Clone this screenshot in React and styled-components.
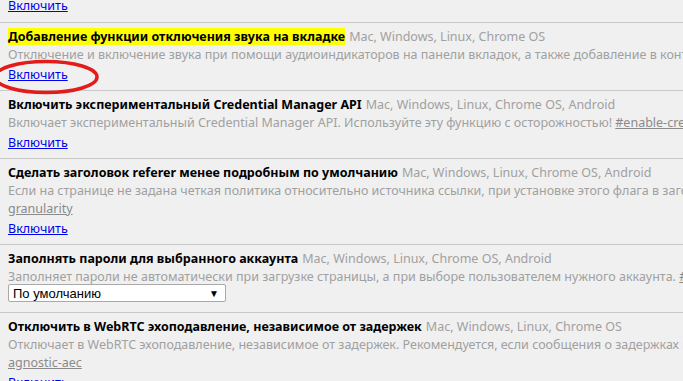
import styled, { createGlobalStyle } from 'styled-components';

const GlobalStyle = createGlobalStyle`
  html, body {
    margin: 0;
    padding: 0;
    background: #f0f0f0;
    overflow: hidden;
  }
  body {
    font-family: 'Noto Sans', 'Open Sans', sans-serif;
    font-size: 12.5px;
  }
`;

const Page = styled.div`
  position: relative;
  width: 683px;
  height: 381px;
  overflow: hidden;
`;

const Experiment = styled.div`
  padding: ${(p) => (p.$tail ? '0 8px 10px' : '4px 8px 6px')};
  border-bottom: 1px solid #c9c9c9;
  white-space: nowrap;

  &:last-child {
    border-bottom: none;
  }
`;

const Title = styled.div`
  line-height: 19px;
  color: #000;

  strong {
    font-weight: 700;
    background: ${(p) => (p.$hl ? '#ffff00' : 'transparent')};
  }

  span {
    color: #a0a0a0;
    margin-left: 4px;
  }
`;

const Desc = styled.div`
  line-height: 18px;
  color: #a0a0a0;

  a {
    color: #8a8a8a;
    text-decoration: underline;
  }
`;

const Extra = styled.div`
  line-height: 18px;

  a {
    color: #8a8a8a;
    text-decoration: underline;
  }
`;

const Enable = styled.a`
  display: block;
  margin-top: ${(p) => (p.$tail ? '0' : '1px')};
  line-height: ${(p) => (p.$tail ? '12px' : '19px')};
  color: #0000ee;
  text-decoration: underline;
  cursor: pointer;
`;

const Select = styled.div`
  width: 206px;
  height: 16px;
  margin: -2px 0 4px;
  padding: 0 6px 0 4px;
  box-sizing: content-box;
  display: flex;
  align-items: center;
  justify-content: space-between;
  background: #fff;
  border: 1px solid #a9a9a9;
  border-radius: 2px;
  font-family: 'Liberation Sans', Arial, sans-serif;
  font-size: 13px;
  color: #000;

  i {
    font-style: normal;
    font-size: 10px;
  }
`;

const Marker = styled.svg`
  position: absolute;
  left: -10px;
  top: 58px;
  width: 115px;
  height: 38px;
  pointer-events: none;
`;

export default function App() {
  return (
    <Page>
      <GlobalStyle />
      <Experiment $tail>
        <Enable $tail>Включить</Enable>
      </Experiment>

      <Experiment>
        <Title $hl>
          <strong>Добавление функции отключения звука на вкладке</strong>
          <span>Mac, Windows, Linux, Chrome OS</span>
        </Title>
        <Desc>
          Отключение и включение звука при помощи аудиоиндикаторов на панели вкладок, а также добавление в контекстное меню вкладки
        </Desc>
        <Enable>Включить</Enable>
      </Experiment>

      <Experiment>
        <Title>
          <strong>Включить экспериментальный Credential Manager API</strong>
          <span>Mac, Windows, Linux, Chrome OS, Android</span>
        </Title>
        <Desc>
          Включает экспериментальный Credential Manager API. Используйте эту функцию с осторожностью!{' '}
          <a>#enable-credential-manager-api</a>
        </Desc>
        <Enable>Включить</Enable>
      </Experiment>

      <Experiment>
        <Title>
          <strong>Сделать заголовок referer менее подробным по умолчанию</strong>
          <span>Mac, Windows, Linux, Chrome OS, Android</span>
        </Title>
        <Desc>
          Если на странице не задана четкая политика относительно источника ссылки, при установке этого флага в заголовке referer
        </Desc>
        <Extra>
          <a>granularity</a>
        </Extra>
        <Enable>Включить</Enable>
      </Experiment>

      <Experiment>
        <Title>
          <strong>Заполнять пароли для выбранного аккаунта</strong>
          <span>Mac, Windows, Linux, Chrome OS, Android</span>
        </Title>
        <Desc>
          Заполняет пароли не автоматически при загрузке страницы, а при выборе пользователем нужного аккаунта.{' '}
          <a>#fill-on-account-select</a>
        </Desc>
        <Select>
          По умолчанию<i>▼</i>
        </Select>
      </Experiment>

      <Experiment>
        <Title>
          <strong>Отключить в WebRTC эхоподавление, независимое от задержек</strong>
          <span>Mac, Windows, Linux, Chrome OS</span>
        </Title>
        <Desc>
          Отключает в WebRTC эхоподавление, независимое от задержек. Рекомендуется, если сообщения о задержках ненадежны
        </Desc>
        <Extra>
          <a>agnostic-aec</a>
        </Extra>
        <Enable>Включить</Enable>
      </Experiment>

      <Marker viewBox="0 0 115 38">
        <ellipse cx="56" cy="19" rx="51" ry="15.5" fill="none" stroke="#e31b1b" strokeWidth="3.5" />
      </Marker>
    </Page>
  );
}
